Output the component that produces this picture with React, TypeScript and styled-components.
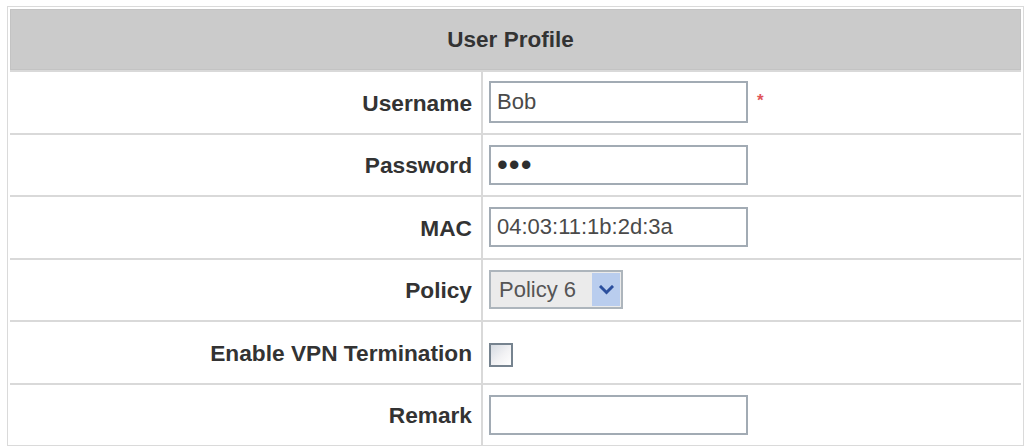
import React from "react";
import styled, { createGlobalStyle } from "styled-components";

const GlobalStyle = createGlobalStyle`
  html, body {
    margin: 0;
    padding: 0;
    background: #ffffff;
  }
  body {
    font-family: "Liberation Sans", Arial, sans-serif;
    color: #333333;
  }
`;

const Page = styled.div`
  padding: 6px 0 0 7px;
`;

const Table = styled.div`
  box-sizing: border-box;
  width: 1017px;
  border: 1px solid #dadada;
  padding: 2px 2px 0;
  display: flex;
  flex-direction: column;
`;

const Header = styled.div`
  box-sizing: border-box;
  height: 61px;
  background: #cbcbcb;
  border: 1px solid #c3c3c3;
  display: flex;
  align-items: center;
  justify-content: center;
  font-weight: bold;
  font-size: 22.5px;
  color: #333333;
  padding-right: 10px;
`;

const Row = styled.div`
  box-sizing: border-box;
  height: 62.5px;
  border-top: 2px solid #d9d9d9;
  display: grid;
  grid-template-columns: 473px 1fr;
`;

const Label = styled.div`
  box-sizing: border-box;
  border-right: 2px solid #d9d9d9;
  display: flex;
  align-items: center;
  justify-content: flex-end;
  padding: 2px 9px 0 0;
  font-weight: bold;
  font-size: 22.7px;
  color: #333333;
  white-space: nowrap;
`;

const Value = styled.div`
  display: flex;
  align-items: center;
  padding-left: 6px;
`;

const TextInput = styled.input<{ $tall?: boolean; $secret?: boolean }>`
  box-sizing: border-box;
  width: 259px;
  height: ${(p) => (p.$tall ? "42px" : "40px")};
  border: 2px solid #a2abb4;
  background: #ffffff;
  padding: 0 6px;
  margin: 0;
  font-family: "Liberation Sans", Arial, sans-serif;
  font-size: ${(p) => (p.$secret ? "31px" : "22px")};
  letter-spacing: ${(p) => (p.$secret ? "1px" : "0")};
  color: ${(p) => (p.$secret ? "#2e2e2e" : "#4a4a4a")};
  outline: none;
`;

const Required = styled.span`
  margin-left: 9px;
  margin-top: -2px;
  color: #e0555a;
  font-size: 17px;
  font-weight: bold;
`;

const Select = styled.div`
  box-sizing: border-box;
  width: 134px;
  height: 39px;
  border: 2px solid #adb5bc;
  background: #ebebeb;
  display: flex;
  align-items: stretch;
  padding: 1px;
`;

const SelectText = styled.span`
  flex: 1;
  display: flex;
  align-items: center;
  padding-left: 7px;
  font-size: 22px;
  color: #555555;
`;

const SelectArrow = styled.span`
  width: 28px;
  background: #b9cdee;
  display: flex;
  align-items: center;
  justify-content: center;
`;

const Check = styled.span`
  box-sizing: border-box;
  width: 24px;
  height: 24px;
  margin-top: 5px;
  border: 2px solid #76838f;
  background: linear-gradient(135deg, #d6dbe2 0%, #f2f2f4 55%, #ffffff 100%);
`;

export default function App() {
  return (
    <>
      <GlobalStyle />
      <Page>
        <Table>
          <Header>User Profile</Header>
          <Row>
            <Label>Username</Label>
            <Value>
              <TextInput $tall type="text" defaultValue="Bob" />
              <Required>*</Required>
            </Value>
          </Row>
          <Row>
            <Label>Password</Label>
            <Value>
              <TextInput $secret type="password" defaultValue="bob" />
            </Value>
          </Row>
          <Row>
            <Label>MAC</Label>
            <Value>
              <TextInput type="text" defaultValue="04:03:11:1b:2d:3a" />
            </Value>
          </Row>
          <Row>
            <Label>Policy</Label>
            <Value>
              <Select>
                <SelectText>Policy 6</SelectText>
                <SelectArrow>
                  <svg width="15" height="10" viewBox="0 0 15 10">
                    <path
                      d="M2 2 L7.5 7.5 L13 2"
                      fill="none"
                      stroke="#2b4f9e"
                      strokeWidth="3"
                      strokeLinecap="square"
                    />
                  </svg>
                </SelectArrow>
              </Select>
            </Value>
          </Row>
          <Row>
            <Label>Enable VPN Termination</Label>
            <Value>
              <Check />
            </Value>
          </Row>
          <Row>
            <Label>Remark</Label>
            <Value>
              <TextInput type="text" defaultValue="" />
            </Value>
          </Row>
        </Table>
      </Page>
    </>
  );
}
